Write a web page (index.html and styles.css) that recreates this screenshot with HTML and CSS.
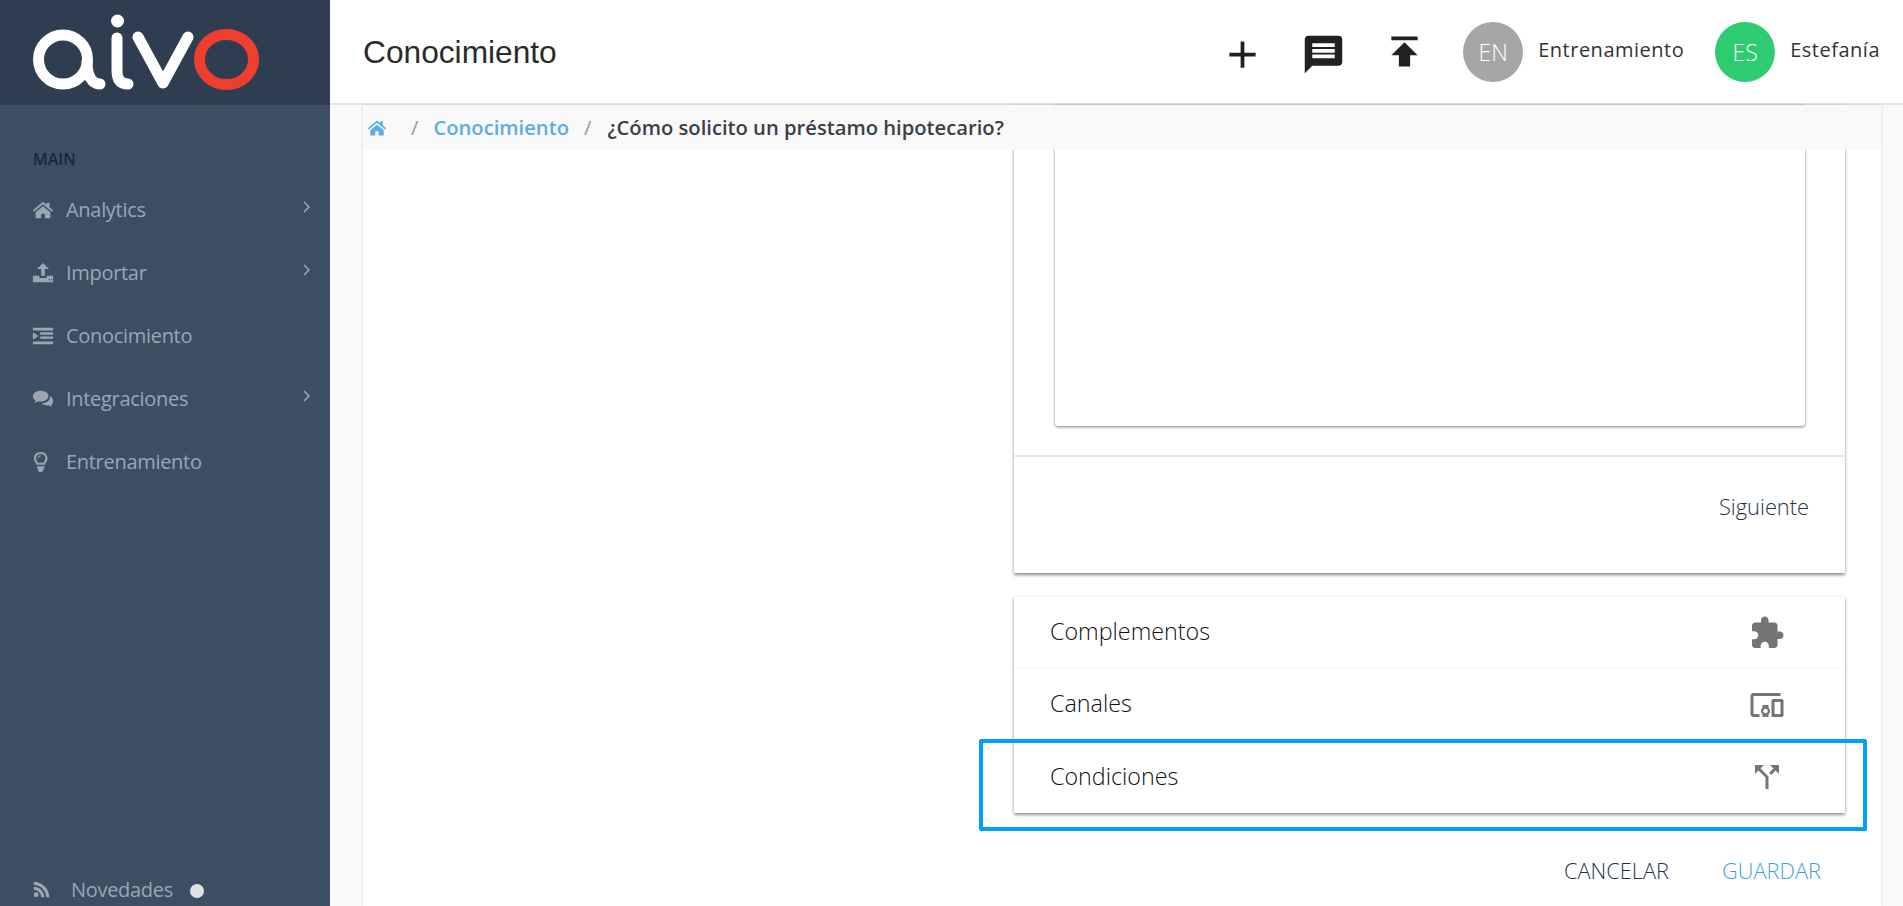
FILE: index.html
```html
<!DOCTYPE html>
<html lang="es">
<head>
<meta charset="utf-8">
<title>Conocimiento</title>
<link rel="stylesheet" href="styles.css">
</head>
<body>
<aside class="sidebar">
  <div class="brand">
    <svg class="logo" width="330" height="105" viewBox="0 0 330 105" aria-label="aivo">
      <g fill="none" stroke="#fff" stroke-width="11" stroke-linecap="round" stroke-linejoin="round">
        <ellipse cx="63" cy="59.500" rx="24.500" ry="24.500"/>
        <path d="M87 62c0 14 5 22 13 22"/>
        <path d="M117 38v32c0 9 3 14 11 14"/>
        <path d="M138 37l25 46 25-46"/>
      </g>
      <circle cx="117.500" cy="21" r="6.500" fill="#fff"/>
      <ellipse cx="226.500" cy="59.500" rx="27" ry="25" fill="none" stroke="#ef3e2e" stroke-width="11"/>
    </svg>
  </div>
  <div class="nav-label">MAIN</div>
  <nav class="menu">
    <a class="menu-item">
      <svg class="menu-icon" viewBox="0 0 24 24"><path d="M12 3 1 12.300l1.300 1.600L12 5.800l9.700 8.100 1.300-1.600-4-3.400V4h-3v2.400zM4 14.500V21h6v-5h4v5h6v-6.500L12 8z"/></svg>
      <span class="menu-text">Analytics</span>
      <svg class="chevron" viewBox="0 0 10 14"><path d="M2 2l5 5-5 5"/></svg>
    </a>
    <a class="menu-item">
      <svg class="menu-icon" viewBox="0 0 24 24"><path d="M12 1l6.500 6.500H14V15h-4V7.500H5.500zM1 15h7v2.500h8V15h7v7H1zm17 3.500v1.300h1.300v-1.300zm2.600 0v1.300h1.300v-1.300z"/></svg>
      <span class="menu-text">Importar</span>
      <svg class="chevron" viewBox="0 0 10 14"><path d="M2 2l5 5-5 5"/></svg>
    </a>
    <a class="menu-item">
      <svg class="menu-icon" viewBox="0 0 24 24"><path d="M1 3h22v3H1zM9 8h14v2.500H9zM9 12.500h14V15H9zM1 18h22v3H1zM1 8l6 4-6 4z"/></svg>
      <span class="menu-text">Conocimiento</span>
    </a>
    <a class="menu-item">
      <svg class="menu-icon" viewBox="0 0 24 24"><path d="M9.500 3C4.800 3 1 5.700 1 9c0 1.900 1.200 3.500 3 4.600-.3 1-.8 1.900-1.500 2.600 1.700-.3 3.100-.9 4.300-1.800.9.200 1.800.3 2.700.3 4.700 0 8.500-2.700 8.500-6S14.200 3 9.500 3z"/><path d="M19.500 8.500c.2.500.2.900.2 1.300 0 4-4.200 6.800-9 6.900 1.300 1.500 3.500 2.300 5.800 2.300.7 0 1.300-.1 1.900-.2 1 .9 2.200 1.400 3.600 1.700-.5-.8-.9-1.500-1-2.300 1.300-1 2-2.200 2-3.600 0-2.500-1.300-4.900-3.500-6.100z"/></svg>
      <span class="menu-text">Integraciones</span>
      <svg class="chevron" viewBox="0 0 10 14"><path d="M2 2l5 5-5 5"/></svg>
    </a>
    <a class="menu-item">
      <svg class="menu-icon" viewBox="0 0 24 24"><path fill-rule="evenodd" d="M9.500 1C5.200 1 2 4 2 8c0 2.800 2.200 4.500 2.700 7h9.600c.5-2.500 2.700-4.200 2.700-7 0-4-3.200-7-7.500-7zm0 2.300c3 0 5.200 2 5.200 4.700 0 1.900-1.500 3.300-2.200 4.800h-6C5.800 11.300 4.300 9.900 4.300 8c0-2.700 2.200-4.700 5.200-4.700z"/><path d="M5.500 16.500h8v2l-1 1v1.500L11 23H8l-1.500-2v-1.500l-1-1z"/><path d="M9.500 4.500c-2 0-3.500 1.400-3.500 3.500h1.300c0-1.300 1-2.200 2.200-2.200z"/></svg>
      <span class="menu-text">Entrenamiento</span>
    </a>
  </nav>
  <div class="sidebar-foot">
    <svg class="foot-icon" viewBox="0 0 24 24"><circle cx="4.500" cy="19.500" r="3.500"/><path d="M1 8v4.500c5.800 0 10.500 4.700 10.500 10.500H16C16 14.700 9.300 8 1 8z"/><path d="M1 1v4.500c9.700 0 17.500 7.800 17.500 17.500H23C23 10.800 13.200 1 1 1z"/></svg>
    <span class="foot-text">Novedades</span>
    <span class="foot-dot"></span>
  </div>
</aside>
<main class="main">
  <header class="topbar">
    <h1 class="title">Conocimiento</h1>
    <div class="actions">
      <svg class="action-icon" viewBox="0 0 24 24"><path d="M19 13h-6v6h-2v-6H5v-2h6V5h2v6h6v2z"/></svg>
      <svg class="action-icon" viewBox="0 0 24 24"><path d="M20 2H4c-1.100 0-2 .9-2 2v18l4-4h14c1.100 0 2-.9 2-2V4c0-1.100-.9-2-2-2zm-2 12H6v-2h12v2zm0-3H6V9h12v2zm0-3H6V6h12v2z"/></svg>
      <svg class="action-icon action-icon-up" viewBox="0 0 24 24"><path d="M5 4v2h14V4H5zm0 10h4v6h6v-6h4l-7-7-7 7z"/></svg>
    </div>
    <div class="user user-first">
      <span class="avatar avatar-grey">EN</span>
      <span class="user-name">Entrenamiento</span>
    </div>
    <div class="user">
      <span class="avatar avatar-green">ES</span>
      <span class="user-name">Estefanía</span>
    </div>
  </header>
  <div class="content">
    <section class="panel">
      <div class="column">
        <div class="card">
          <div class="editor"></div>
          <div class="card-rule"></div>
          <div class="card-foot"><a class="next">Siguiente</a></div>
        </div>
        <ul class="accordion">
          <li class="acc-row">
            <span class="acc-label">Complementos</span>
            <svg class="acc-icon" viewBox="0 0 24 24"><path d="M20.500 11H19V7c0-1.100-.9-2-2-2h-4V3.500C13 2.120 11.880 1 10.500 1S8 2.120 8 3.500V5H4c-1.100 0-1.990.9-1.990 2v3.800H3.500c1.490 0 2.700 1.210 2.700 2.700s-1.210 2.700-2.700 2.700H2V20c0 1.100.9 2 2 2h3.800v-1.500c0-1.490 1.210-2.700 2.700-2.700 1.490 0 2.700 1.210 2.700 2.700V22H17c1.100 0 2-.9 2-2v-4h1.500c1.380 0 2.500-1.120 2.500-2.500S21.880 11 20.500 11z"/></svg>
          </li>
          <li class="acc-row">
            <span class="acc-label">Canales</span>
            <svg class="acc-icon" viewBox="0 0 24 24"><path d="M3 6h18V4H3c-1.100 0-2 .9-2 2v12c0 1.100.9 2 2 2h4v-2H3V6zm10 6H9v1.780c-.61.55-1 1.330-1 2.220s.39 1.670 1 2.220V20h4v-1.780c.61-.55 1-1.340 1-2.220s-.39-1.670-1-2.220V12zm-2 5.500c-.83 0-1.500-.67-1.500-1.500s.67-1.500 1.500-1.500 1.500.67 1.500 1.500-.67 1.500-1.500 1.500zM22 8h-6c-.5 0-1 .5-1 1v10c0 .5.5 1 1 1h6c.5 0 1-.5 1-1V9c0-.5-.5-1-1-1zm-1 10h-4v-8h4v8z"/></svg>
          </li>
          <li class="acc-row acc-row-marked">
            <span class="acc-label">Condiciones</span>
            <svg class="acc-icon" viewBox="0 0 24 24"><path d="M14 4l2.290 2.290-2.880 2.880 1.420 1.420 2.880-2.880L20 10V4zm-4 0H4v6l2.290-2.290 4.710 4.700V20h2v-8.410l-5.290-5.300z"/></svg>
            <span class="highlight"></span>
          </li>
        </ul>
        <div class="form-actions">
          <a class="btn btn-cancel">CANCELAR</a>
          <a class="btn btn-save">GUARDAR</a>
        </div>
      </div>
    </section>
    <ol class="breadcrumb">
      <li class="crumb-home">
        <svg class="crumb-icon" viewBox="0 0 24 24"><path d="M12 3 1 12.300l1.300 1.600L12 5.800l9.700 8.100 1.300-1.600-4-3.400V4h-3v2.400zM4 14.500V21h6v-5h4v5h6v-6.500L12 8z"/></svg>
      </li>
      <li class="crumb-sep crumb-sep-first">/</li>
      <li class="crumb-link">Conocimiento</li>
      <li class="crumb-sep crumb-sep-last">/</li>
      <li class="crumb-current">¿Cómo solicito un préstamo hipotecario?</li>
    </ol>
  </div>
</main>
</body>
</html>
```
FILE: styles.css
```css
* { box-sizing: border-box; }
html, body { height: 100%; }
body {
  margin: 0;
  display: flex;
  height: 906px;
  overflow: hidden;
  font-family: "Open Sans", sans-serif;
  background: #f9f9f9;
  color: #333;
}
ul, ol { list-style: none; margin: 0; padding: 0; }

/* sidebar */
.sidebar {
  width: 330px;
  flex: none;
  display: flex;
  flex-direction: column;
  background: #3c4e62;
}
.brand { height: 105px; background: #2e3d50; }
.logo { display: block; }
.nav-label {
  margin: 44px 0 0 33px;
  height: 20px;
  line-height: 20px;
  font-size: 16px;
  font-weight: 600;
  color: #1c2733;
}
.menu { margin-top: 9px; }
.menu-item {
  height: 63px;
  display: flex;
  align-items: center;
  padding-left: 32px;
  color: #9ba6b3;
}
.menu-icon { width: 22px; height: 22px; fill: #9ba6b3; flex: none; }
.menu-text { margin-left: 12px; font-size: 20px; letter-spacing: -0.3px; }
.chevron {
  width: 10px;
  height: 14px;
  margin: -6px 18px 0 auto;
  fill: none;
  stroke: #9ba6b3;
  stroke-width: 1.6;
}
.sidebar-foot {
  margin-top: auto;
  height: 34px;
  display: flex;
  align-items: center;
  padding: 0 0 0 33px;
  color: #9ba6b3;
}
.foot-icon { width: 17px; height: 17px; fill: #9ba6b3; flex: none; }
.foot-text { margin-left: 21px; font-size: 20px; letter-spacing: -0.3px; }
.foot-dot { width: 14px; height: 14px; border-radius: 50%; background: #e0e0e0; margin: 4px 0 0 17px; }

/* main */
.main { flex: 1; min-width: 0; display: flex; flex-direction: column; }
.topbar {
  height: 105px;
  flex: none;
  display: flex;
  align-items: center;
  padding: 0 23px 0 33px;
  background: #fff;
  border-bottom: 2px solid #e0e6f0;
}
.title {
  margin: 2px auto 0 0;
  font-family: "Liberation Sans", Arial, sans-serif;
  font-size: 31.700px;
  font-weight: 400;
  color: #2a2a2a;
}
.actions { display: flex; gap: 36px; margin-top: 5px; }
.action-icon { width: 45px; height: 45px; fill: #212121; display: block; }
.action-icon-up { margin-top: -3px; }
.user { display: flex; align-items: center; }
.user-first { margin: 0 31px 0 36px; }
.avatar {
  width: 60px;
  height: 60px;
  border-radius: 50%;
  flex: none;
  display: flex;
  align-items: center;
  justify-content: center;
  color: #fff;
  font-size: 23px;
  font-weight: 300;
}
.avatar-grey { background: #a6a6a6; }
.avatar-green { background: #2ecc71; }
.user-name { margin: -4px 0 0 15px; font-size: 20px; letter-spacing: 0.5px; color: #333; }

/* content */
.content {
  flex: 1;
  min-height: 0;
  position: relative;
  padding: 0 22px 0 33px;
  background: #f9f9f9;
}
.panel {
  height: 100%;
  padding-left: 651px;
  background: #fff;
  box-shadow: 0 0 3px rgba(0, 0, 0, .14);
}
.column { width: 831px; }
.card {
  height: 468px;
  display: flex;
  flex-direction: column;
  background: #fff;
  box-shadow: 0 2px 3px rgba(0, 0, 0, .45);
}
.editor {
  height: 321px;
  margin: 0 40px 0 41px;
  flex: none;
  border-radius: 0 0 3px 3px;
  background: #fff;
  box-shadow: 0 1px 3px rgba(0, 0, 0, .5);
}
.card-rule { height: 2px; margin-top: 29px; background: #e6e6e6; flex: none; }
.card-foot { display: flex; justify-content: flex-end; padding: 36px 36px 0 0; }
.next { font-size: 21.800px; line-height: 28px; font-weight: 300; color: #1f3247; }

.accordion {
  margin-top: 24px;
  background: #fff;
  box-shadow: 0 2px 3px rgba(0, 0, 0, .4), 0 0 3px rgba(0, 0, 0, .1);
}
.acc-row {
  position: relative;
  height: 72px;
  display: flex;
  align-items: center;
  justify-content: space-between;
  padding: 0 60px 0 36px;
  color: #111;
  border-bottom: 1px solid #f5f5f5;
}
.acc-label { font-size: 23.300px; font-weight: 300; margin-top: -3px; }
.acc-row-marked { border-bottom: 0; }
.acc-icon { width: 36px; height: 36px; fill: #757575; display: block; }
.highlight {
  position: absolute;
  top: -2px;
  left: -35px;
  right: -22px;
  bottom: -18px;
  border: 4px solid #009fff;
  border-radius: 2px;
  pointer-events: none;
}
.form-actions {
  display: flex;
  justify-content: flex-end;
  gap: 53px;
  padding: 44px 24px 0 0;
}
.btn { font-size: 21.800px; line-height: 28px; font-weight: 300; }
.btn-cancel { color: #1f3247; }
.btn-save { color: #3f9fdd; }

/* breadcrumb overlays the scrolled panel */
.breadcrumb {
  position: absolute;
  top: 0;
  left: 33px;
  right: 22px;
  height: 45px;
  padding-bottom: 2px;
  display: flex;
  align-items: center;
  background: rgba(248, 248, 248, .9);
  font-size: 20.200px;
  font-weight: 600;
}
.crumb-home { margin: 2px 0 0 4px; display: flex; }
.crumb-icon { width: 20px; height: 20px; fill: #5dade2; display: block; }
.crumb-sep { margin: 0 15px; color: #999; font-weight: 400; }
.crumb-sep-first { margin: 0 15px 0 24px; }
.crumb-sep-last { margin-right: 16px; }
.crumb-link { color: #5dade2; }
.crumb-current { color: #3a3f47; }
```
